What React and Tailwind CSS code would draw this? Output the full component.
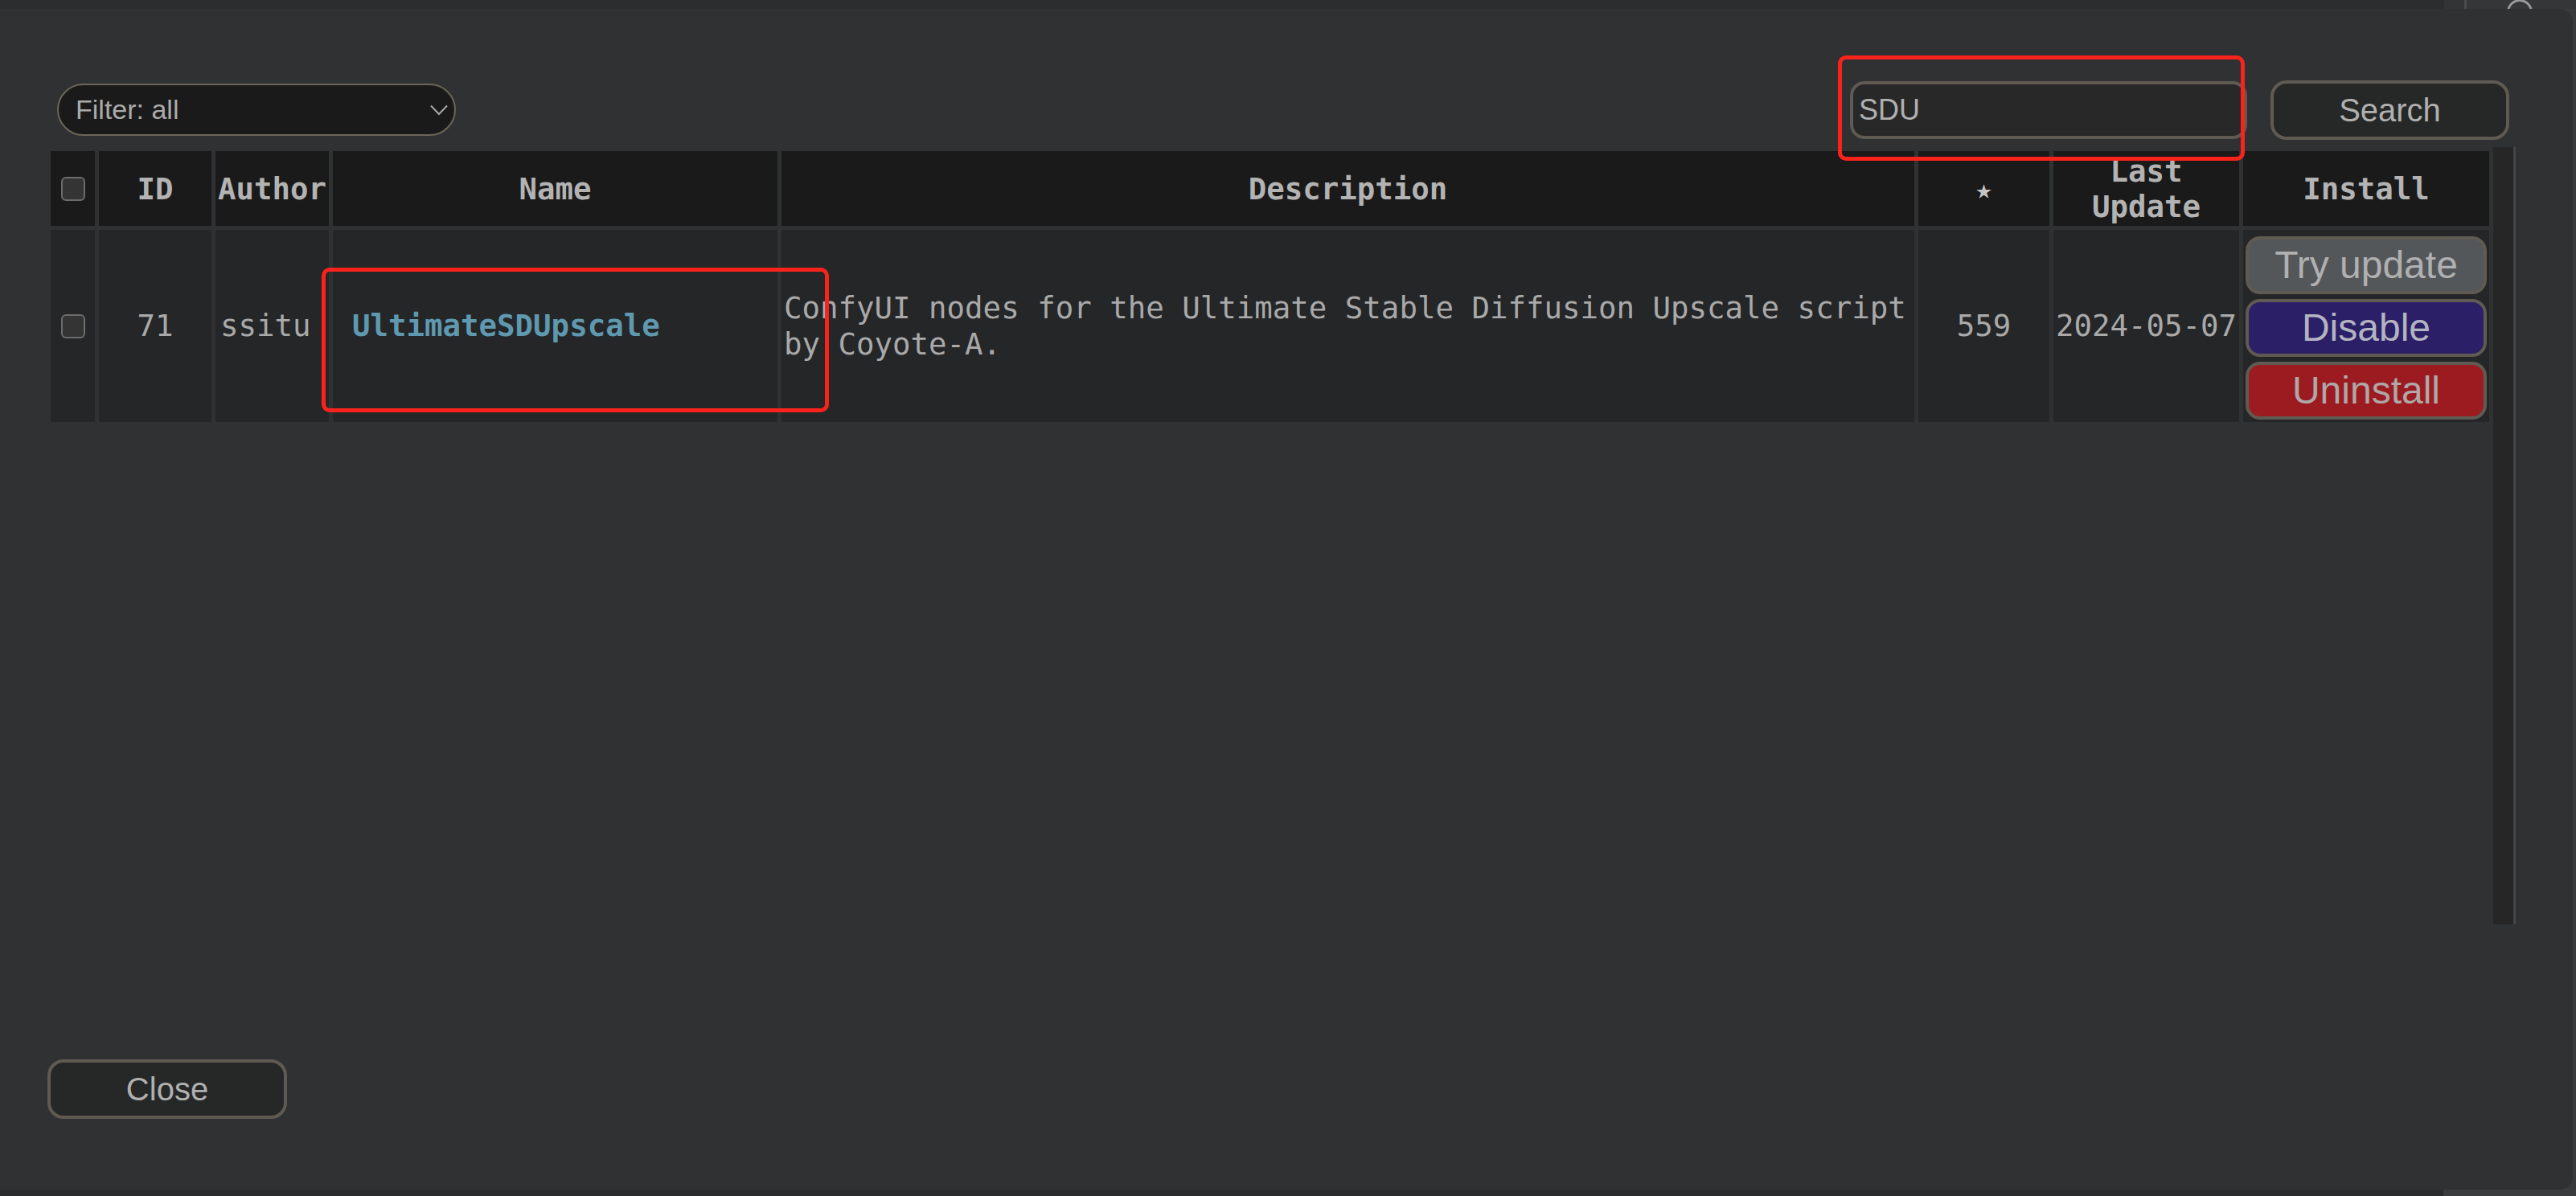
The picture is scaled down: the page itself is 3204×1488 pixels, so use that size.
const mono = "font-['DejaVu_Sans_Mono',monospace]";
const sans = "font-['Liberation_Sans',Arial,sans-serif]";

const Checkbox = () => (
  <div className="mx-auto w-[30px] h-[30px] rounded-[6px] border-2 border-[#6c6c6c] bg-[#343434]" />
);

const cols = [55, 140, 141, 553, 1409, 163, 231, 306];

function ResultTable() {
  return (
    <table className={`w-[3043px] table-fixed border-separate border-spacing-[5px] self-start ${mono}`}>
      <colgroup>
        {cols.map((w, i) => (
          <col key={i} style={{ width: w }} />
        ))}
      </colgroup>
      <thead>
        <tr className="h-[93px]">
          <th className="bg-[#1a1a1a] p-0 align-middle">
            <Checkbox />
          </th>
          <th className="bg-[#1a1a1a] p-0 text-[37.4px] leading-[44px] font-bold text-[#b3b3b3] text-center">ID</th>
          <th className="bg-[#1a1a1a] p-0 text-[37.4px] leading-[44px] font-bold text-[#b3b3b3] text-center">Author</th>
          <th className="bg-[#1a1a1a] p-0 text-[37.4px] leading-[44px] font-bold text-[#b3b3b3] text-center">Name</th>
          <th className="bg-[#1a1a1a] p-0 text-[37.4px] leading-[44px] font-bold text-[#b3b3b3] text-center">Description</th>
          <th className="bg-[#1a1a1a] p-0 text-[34px] leading-[44px] font-bold text-[#c4c4c4] text-center">★</th>
          <th className="bg-[#1a1a1a] p-0 text-[37.4px] leading-[44px] font-bold text-[#b3b3b3] text-center">
            Last
            <br />
            Update
          </th>
          <th className="bg-[#1a1a1a] p-0 text-[37.4px] leading-[44px] font-bold text-[#b3b3b3] text-center">Install</th>
        </tr>
      </thead>
      <tbody>
        <tr className="h-[239px]">
          <td className="bg-[#252628] p-0 align-middle">
            <Checkbox />
          </td>
          <td className="bg-[#252628] p-0 text-[37.4px] text-[#a9a9a9] text-center align-middle">71</td>
          <td className="bg-[#252628] p-0 pl-[6px] text-[37.4px] text-[#a9a9a9] align-middle">ssitu</td>
          <td className="bg-[#252628] p-0 pl-[24px] text-[37.4px] font-bold text-[#5f99b0] align-middle">UltimateSDUpscale</td>
          <td className="bg-[#252628] p-0 pl-[3px] text-[37.4px] leading-[45px] text-[#a9a9a9] align-middle">
            ConfyUI nodes for the Ultimate Stable Diffusion Upscale script by Coyote-A.
          </td>
          <td className="bg-[#252628] p-0 text-[37.4px] text-[#a9a9a9] text-center align-middle">559</td>
          <td className="bg-[#252628] p-0 text-[37.4px] text-[#a9a9a9] text-center align-middle">2024-05-07</td>
          <td className="bg-[#252628] p-0 pt-[8px] px-[3px] align-top">
            <div className={`flex flex-col gap-[6px] ${sans}`}>
              <button className="h-[72px] rounded-[18px] border-4 border-[#5f5a52] bg-[#53575a] text-[48px] text-[#b0b0b0] flex items-center justify-center">
                Try update
              </button>
              <button className="h-[72px] rounded-[18px] border-4 border-[#5f5a52] bg-[#2b1f68] text-[48px] text-[#b4b4c0] flex items-center justify-center">
                Disable
              </button>
              <button className="h-[72px] rounded-[18px] border-4 border-[#5f5a52] bg-[#9b1b20] text-[48px] text-[#b0a8a8] flex items-center justify-center">
                Uninstall
              </button>
            </div>
          </td>
        </tr>
      </tbody>
    </table>
  );
}

function Dialog() {
  return (
    <div className={`relative w-[3200px] h-full bg-[#303133] rounded-r-[16px] flex flex-col ${sans}`}>
      {/* Toolbar */}
      <div className="flex items-center h-[75px] mt-[88px] shrink-0">
        <div className="ml-[71px] w-[496px] h-[65px] rounded-full border-2 border-[#6b6658] bg-[#1a1a1a] flex items-center justify-between pl-[21px] pr-[8px]">
          <span className="text-[34px] text-[#ababab]">Filter: all</span>
          <svg width="22" height="14" viewBox="0 0 22 14" fill="none" stroke="#a8a8a8" strokeWidth="2">
            <path d="M1 1.5 L11 12 L21 1.5" />
          </svg>
        </div>
        <div className="ml-auto w-[494px] h-[72px] rounded-[18px] border-4 border-[#5f5a52] bg-[#282828] flex items-center pl-[7px]">
          <span className="text-[36px] text-[#b0b0b0]">SDU</span>
        </div>
        <button className="ml-[29px] mr-[79px] w-[297px] h-[74px] rounded-[20px] border-4 border-[#5f5a52] bg-[#262727] text-[40px] text-[#b0b0b0] flex items-center justify-center">
          Search
        </button>
      </div>

      {/* Result list */}
      <div className="mt-[9px] ml-[58px] w-[3071px] h-[967px] flex shrink-0">
        <ResultTable />
        <div className="w-[28px] h-full bg-[#262626] border-r-[3px] border-[#464646]" />
      </div>

      {/* Footer */}
      <button className="mt-[168px] ml-[59px] w-[298px] h-[74px] rounded-[20px] border-4 border-[#5f5a52] bg-[#262727] text-[40px] text-[#b0b0b0] flex items-center justify-center shrink-0">
        Close
      </button>

      {/* annotation boxes */}
      <div className="absolute left-[2286px] top-[58px] w-[506px] h-[131px] rounded-[10px] border-[5px] border-[#fa231c] pointer-events-none" />
      <div className="absolute left-[400px] top-[322px] w-[631px] h-[180px] rounded-[10px] border-[5px] border-[#fa231c] pointer-events-none" />
    </div>
  );
}

export default function App() {
  return (
    <div className="w-[3204px] h-[1488px] bg-[#2b2c2e] flex flex-col overflow-hidden">
      <div className="h-[11px] flex shrink-0">
        <div className="w-[3040px] bg-[#2c2d2f]" />
        <div className="w-[25px] bg-[#333436]" />
        <div className="w-[3px] bg-[#4a4b4d]" />
        <div className="flex-1 bg-[#353638] relative overflow-hidden">
          <div className="absolute left-[50px] top-[-1px] w-[32px] h-[32px] rounded-full border-[3px] border-[#9a9a9a]" />
        </div>
      </div>
      <div className="flex h-[1469px] bg-[#393a3c] shrink-0">
        <Dialog />
      </div>
      <div className="h-[8px] flex shrink-0">
        <div className="w-[3039px] bg-[#2a2b2d]" />
        <div className="flex-1 bg-[#3b3c3e]" />
      </div>
    </div>
  );
}
